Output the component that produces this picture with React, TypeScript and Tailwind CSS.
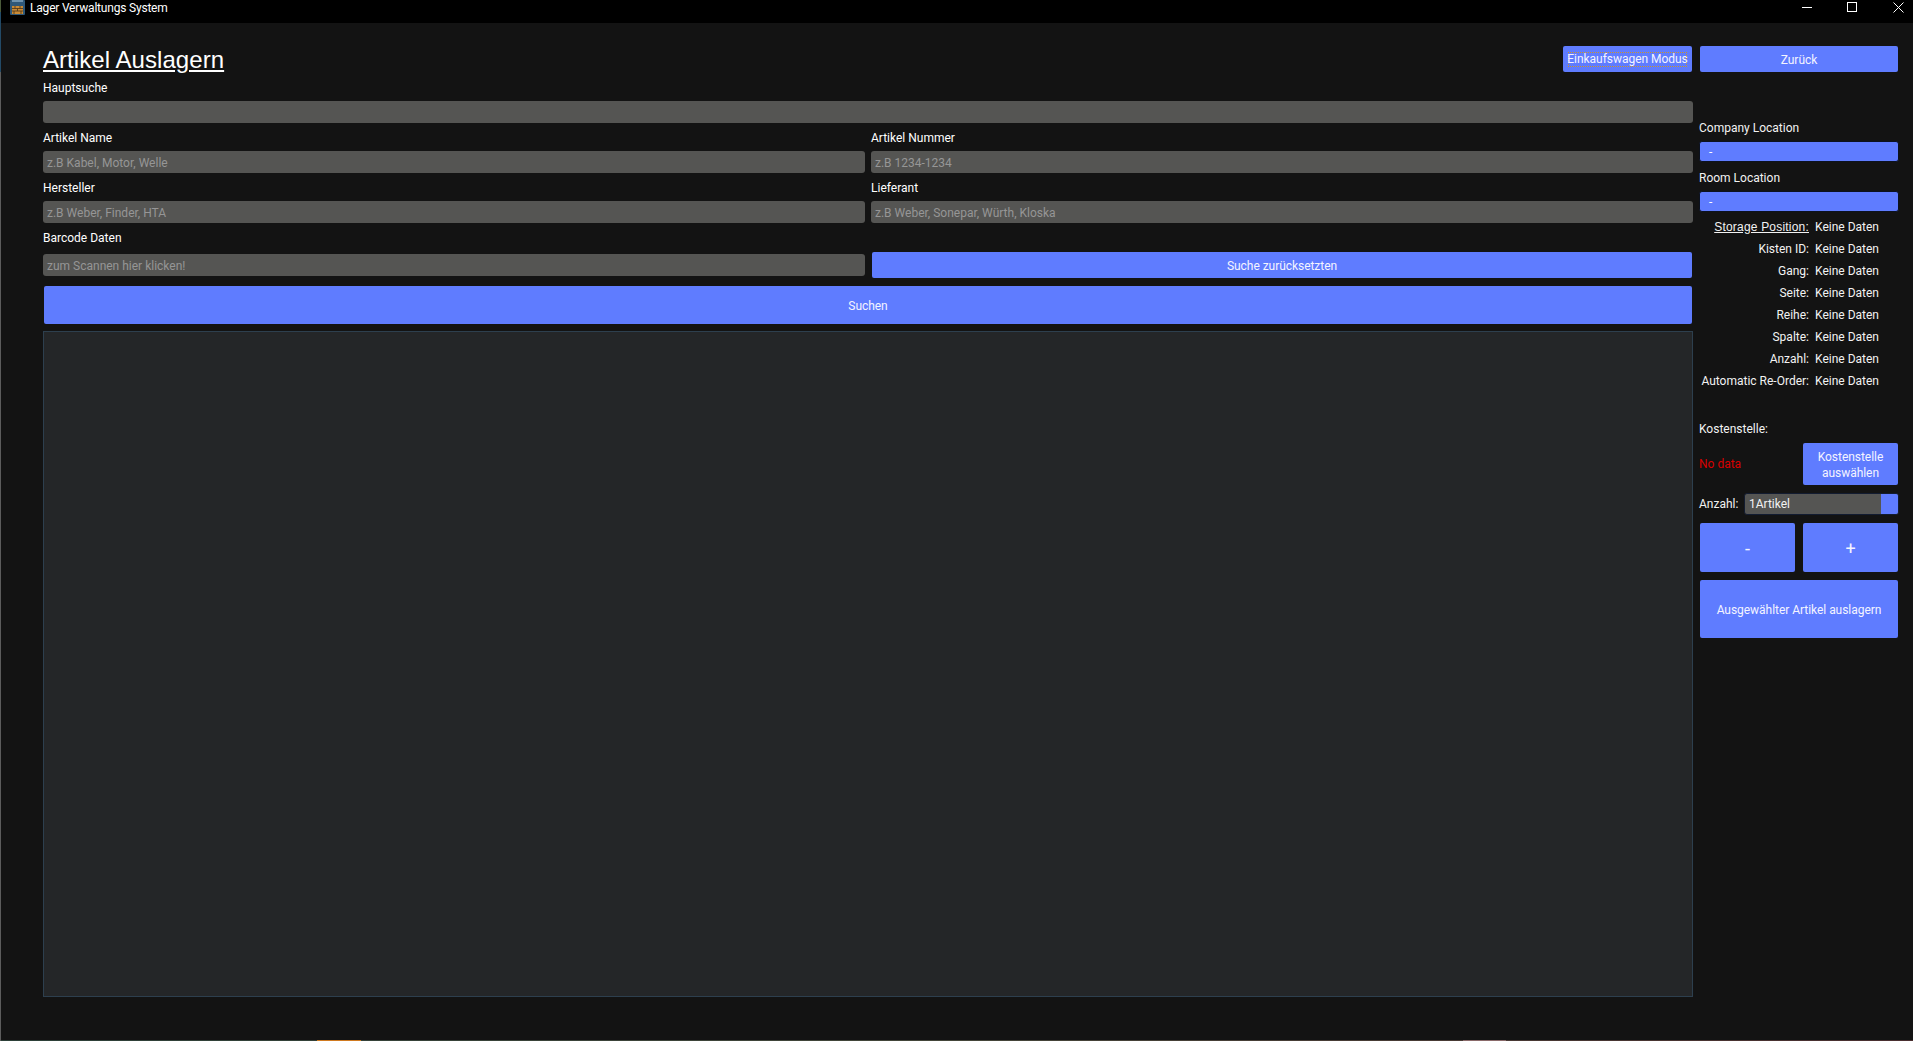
import React from "react";

const FONT = "font-['Roboto','Noto_Sans',sans-serif]";
const blue = "bg-[#5f7cff] text-[#f4f4ff] rounded-[2px] flex items-center justify-center text-center whitespace-nowrap pt-[1px] tracking-[-0.04px]";

function Field({ label, placeholder }: { label: string; placeholder?: string }) {
  return (
    <div className="flex flex-col">
      <div className="h-[16px] leading-[16px] text-[12px] text-white">{label}</div>
      <div className="mt-[5px] h-[22px] rounded-[3px] bg-[#555553] px-[4px] text-[12px] leading-[24px] text-[#969696]">
        {placeholder ?? ""}
      </div>
    </div>
  );
}

function Combo() {
  return (
    <div className="-mx-[1px] h-[21px] rounded-[3px] border border-[#0c1220] bg-[#5f7cff] pl-[9px] text-[12px] leading-[21px] text-white">-</div>
  );
}

function Row({ label, first }: { label: string; first?: boolean }) {
  return (
    <div className="flex h-[22px] items-center whitespace-nowrap text-[12px] text-[#f2f2f2]">
      <div
        className={
          first
            ? "-mt-[1px] w-[109px] text-right font-['Liberation_Sans',sans-serif] tracking-[0.2px] underline"
            : "w-[109px] text-right"
        }
      >
        {label}
      </div>
      <div className="ml-[6px]">Keine Daten</div>
    </div>
  );
}

export default function App() {
  return (
    <div className={`relative flex h-[1041px] w-[1913px] flex-col overflow-hidden bg-[#131313] text-[12px] text-white ${FONT}`}>
      <div className="absolute left-0 top-0 flex h-full w-[1px] flex-col bg-[#5c5c5c]">
        <div className="h-[12px] bg-[#4a5a3a]" />
        <div className="h-[60px] bg-[#234a66]" />
      </div>
      <header className="flex h-[23px] shrink-0 items-start bg-black">
        <svg className="ml-[9px] mt-0 h-[15px] w-[17px] shrink-0" viewBox="0 0 17 15">
          <rect x="1" y="0" width="15" height="15" rx="1" fill="#2f5878" />
          <rect x="3" y="0" width="11" height="2" fill="#6f93ad" />
          <rect x="3" y="6" width="11" height="8" fill="#c98a35" />
          <path d="M3 8.5h11M3 11h11M6 6v2.5M11 6v2.5M8.5 8.5V11M5 11v3M12 11v3" stroke="#4a3418" strokeWidth="0.8" />
        </svg>
        <div className="ml-[4px] whitespace-nowrap text-[12px] leading-[17px] tracking-[-0.2px] text-white">Lager Verwaltungs System</div>
        <div className="flex-1" />
        <svg className="h-[23px] w-[111px] shrink-0" viewBox="0 0 111 23" fill="none" stroke="#ffffff" strokeWidth="1">
          <path d="M0 7.5h10" />
          <rect x="45.5" y="2.5" width="9" height="9" />
          <path d="M91.5 2.5l10 10M101.5 2.5l-10 10" />
        </svg>
      </header>

      <main className="relative flex flex-1 pl-[43px]">
        <div className="flex w-[1650px] shrink-0 flex-col pt-[23px]">
          <div className="flex h-[34px] items-start justify-between">
            <h1 className="font-['Liberation_Sans',sans-serif] text-[24px] leading-[28px] tracking-[0.06px] text-white underline">Artikel Auslagern</h1>
            <button className={`${blue} relative mr-[1px] h-[26px] w-[129px] text-[12px]`}>
              <span className="flex h-[15px] w-[119px] items-center justify-center border border-dotted border-[#c9942f] leading-[13px]">Einkaufswagen Modus</span>
            </button>
          </div>
          <Field label="Hauptsuche" />
          <div className="mt-[7px] grid grid-cols-2 gap-x-[6px] gap-y-[7px]">
            <Field label="Artikel Name" placeholder="z.B Kabel, Motor, Welle" />
            <Field label="Artikel Nummer" placeholder="z.B 1234-1234" />
            <Field label="Hersteller" placeholder="z.B Weber, Finder, HTA" />
            <Field label="Lieferant" placeholder="z.B Weber, Sonepar, Würth, Kloska" />
          </div>
          <div className="mt-[7px] grid grid-cols-2 gap-x-[6px]">
            <div className="flex flex-col">
              <div className="h-[16px] text-[12px] leading-[16px] text-white">Barcode Daten</div>
              <div className="mt-[8px] h-[22px] rounded-[3px] bg-[#555553] px-[4px] text-[12px] leading-[24px] text-[#969696]">zum Scannen hier klicken!</div>
            </div>
            <div className="flex flex-col">
              <button className={`${blue} ml-[1px] mr-[1px] mt-[22px] h-[26px]`}>Suche zurücksetzten</button>
            </div>
          </div>
          <button className={`${blue} mx-[1px] mt-[8px] h-[38px] shrink-0`}>Suchen</button>
          <div className="mt-[7px] h-[666px] shrink-0 border border-[#2d3f4e] bg-[#242628]" />
        </div>

        <aside className="ml-[7px] flex w-[198px] shrink-0 flex-col pt-[23px]">
          <button className={`${blue} h-[26px] shrink-0`}>Zurück</button>
          <div className="-ml-[1px] mt-[48px] h-[16px] text-[12px] leading-[16px] text-[#f2f2f2]">Company Location</div>
          <div className="mt-[5px]"><Combo /></div>
          <div className="-ml-[1px] mt-[8px] h-[16px] text-[12px] leading-[16px] text-[#f2f2f2]">Room Location</div>
          <div className="mt-[5px]"><Combo /></div>
          <div className="mt-[4px] flex flex-col">
            <Row label="Storage Position:" first />
            <Row label="Kisten ID:" />
            <Row label="Gang:" />
            <Row label="Seite:" />
            <Row label="Reihe:" />
            <Row label="Spalte:" />
            <Row label="Anzahl:" />
            <Row label="Automatic Re-Order:" />
          </div>
          <div className="-ml-[1px] mt-[29px] h-[16px] leading-[16px] text-[#f2f2f2]">Kostenstelle:</div>
          <div className="mt-[6px] flex h-[42px] items-center justify-between">
            <span className="-ml-[1px] text-[#d80000]">No data</span>
            <button className={`${blue} h-[42px] w-[95px] leading-[16px]`}>Kostenstelle<br />auswählen</button>
          </div>
          <div className="mt-[8px] flex h-[22px] items-center">
            <span className="-ml-[1px] w-[45px] text-[#f2f2f2]">Anzahl:</span>
            <div className="-mr-[1px] flex h-[22px] flex-1 overflow-hidden rounded-[3px] border border-[#131c30] bg-[#555553]">
              <span className="flex-1 pl-[4px] leading-[20px] text-[#f2f2f2]">1Artikel</span>
              <span className="w-[17px] bg-[#5f7cff]" />
            </div>
          </div>
          <div className="mt-[8px] flex h-[49px] justify-between">
            <button className={`${blue} w-[95px] text-[18px]`}>-</button>
            <button className={`${blue} w-[95px] text-[18px]`}>+</button>
          </div>
          <button className={`${blue} mt-[8px] h-[58px] shrink-0`}>Ausgewählter Artikel auslagern</button>
        </aside>
      </main>
      <footer className="flex h-[1px] shrink-0 bg-gradient-to-r from-[#2c4038] via-[#44463a] to-[#4a2f30]">
        <div className="w-[317px]" />
        <div className="w-[44px] bg-[#d07a20]" />
        <div className="w-[1102px]" />
        <div className="w-[43px] bg-[#8a6a6a]" />
      </footer>
    </div>
  );
}
